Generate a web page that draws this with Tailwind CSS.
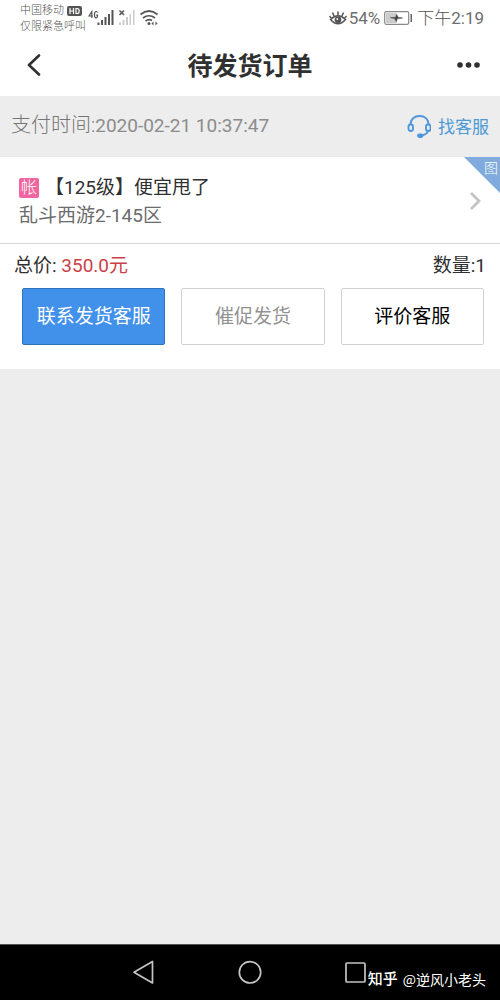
<!DOCTYPE html>
<html lang="zh-CN">
<head>
<meta charset="utf-8">
<meta name="viewport" content="width=device-width, initial-scale=1">
<title>待发货订单</title>
<script src="https://cdn.jsdelivr.net/npm/@tailwindcss/browser@4"></script>
</head>
<body class="flex min-h-screen flex-col bg-[#ededed] font-['Roboto','Noto_Sans_CJK_SC',sans-serif] text-[#303030]">

<!-- Status bar -->
<div class="flex h-9 items-center justify-between bg-white pr-4 pl-5 text-[#6e6e6e]">
  <div class="flex items-center">
    <div class="pt-[2px] text-[11px] leading-4 font-light text-[#555]">
      <div class="flex items-center gap-[3px]">中国移动
        <svg class="h-[10px] w-[15px]" viewBox="0 0 15 10" aria-hidden="true"><rect width="15" height="10" rx="2" fill="#555"/><path d="M3 2v6M6.500 2v6M3 5h3.500M9 2v6M9 2.500h1.200q2 0 2 2.500t-2 2.500H9" fill="none" stroke="#fff" stroke-width="1.200"/></svg>
      </div>
      <div>仅限紧急呼叫</div>
    </div>
    <svg class="ml-[2px] h-6 w-[72px]" viewBox="88 5 72 24" fill="#555" aria-hidden="true">
      <path d="M91.800 17V10.500L89 15h4M97.500 11.500q-.5-1-1.500-1-1.500 0-1.500 3.200t1.500 3.200q1.600 0 1.600-2.800h-1.400" fill="none" stroke="#555" stroke-width="1.200"/>
      <path d="M97.500 21.500h2v2.500h-2zM101 19h2v5h-2zM104.500 16h2v8h-2zM108 13h2v11h-2zM111.500 9h2v15h-2z"/>
      <path d="M119.500 9.500l4.500 4.500M124 9.500l-4.500 4.500" stroke="#555" stroke-width="1.600"/>
      <path fill="#ccc" d="M119 21.500h2v2.500h-2zM122.500 19h2v5h-2zM126 16h2v8h-2zM129.500 13h1.500v11h-1.500zM133 9h1.500v15H133z"/>
      <path d="M140.500 13.500q8.500-7 17 0M143 17q6-4.500 12 0M145.500 20q3.500-2.500 6.500-.5" fill="none" stroke="#555" stroke-width="1.700"/>
      <circle cx="149" cy="22.500" r="1.500"/><path d="M151.500 22.500l2-2v4zM157.500 22.500l-2-2v4z"/>
    </svg>
  </div>
  <div class="flex items-center text-[17px] leading-6">
    <svg class="mr-[2px] h-[18px] w-[18px]" viewBox="0 0 18 18" fill="none" stroke="#555" stroke-width="1.500" aria-hidden="true"><path d="M1.500 10.500Q9 3 16.500 10.500 9 19 1.500 10.500zM9 6V2.500M5 7L3.500 3.500M13 7l1.500-3.500M2.500 9.500L.5 7M15.500 9.500l2-2.500"/><circle cx="9" cy="10.800" r="2.600" fill="#555"/><circle cx="8.300" cy="10" r=".9" fill="#fff" stroke="none"/></svg>
    <span>54%</span>
    <svg class="mx-1 h-[14px] w-[29px]" viewBox="0 0 29 14" aria-hidden="true"><rect x=".7" y=".7" width="24" height="12.600" rx="1.500" fill="#fff" stroke="#888" stroke-width="1.200"/><path d="M2 2h11v10H2z" fill="#ccc"/><path d="M6.500 6.600l5-.2 1.200-2.900 1.500 2.900 4.300.6-5 .6-1.300 2.900-1.500-2.900z" fill="#444" stroke="#444" stroke-width=".6"/><path d="M26.500 3H28v8h-1.500z" fill="#666"/></svg>
    <span class="font-light text-[#505050]">下午<span class="font-normal text-[#6e6e6e]">2:19</span></span>
  </div>
</div>

<!-- Title bar -->
<header class="grid h-[60px] grid-cols-[1fr_auto_1fr] items-center bg-white px-4">
  <button type="button" aria-label="返回" class="flex h-10 w-9 items-center justify-center">
    <svg class="h-6 w-4" viewBox="0 0 16 24" fill="none" stroke="#303030" stroke-width="2.600" stroke-linecap="round" stroke-linejoin="round" aria-hidden="true"><path d="M13 1.500L3 11 13 20.500"/></svg>
  </button>
  <h1 class="pt-[2px] text-[25px] leading-9 font-bold">待发货订单</h1>
  <button type="button" aria-label="更多" class="flex h-10 w-8 items-center justify-center justify-self-end">
    <svg class="h-2 w-6" viewBox="0 0 24 8" fill="#303030" aria-hidden="true"><circle cx="4" cy="3" r="2.800"/><circle cx="12.500" cy="3" r="2.800"/><circle cx="21" cy="3" r="2.800"/></svg>
  </button>
</header>

<main class="grow">
  <div class="flex h-[61px] items-center justify-between px-[11px]">
    <p class="pb-[2px] text-[20px] leading-7 font-light text-[#757575]">支付时间:<span class="text-[19px] font-normal text-[#8c8c8c]">2020-02-21 10:37:47</span></p>
    <a href="#" class="flex items-center gap-[7px] text-[17px] leading-6 text-[#4d9ad6]">
      <svg class="h-6 w-6" viewBox="0 0 24 24" fill="none" stroke="#4f97dc" stroke-width="1.900" aria-hidden="true"><path d="M3.500 9.500C3.500 4 7.500 1 12.500 1s9 3 9 8.500M21.500 15q-1.500 4.500-6.500 5.500"/><rect x="1.500" y="9.500" width="4.500" height="6.500" rx="2.200"/><rect x="19" y="9.500" width="4.500" height="6.500" rx="2.200"/><rect x="11" y="19.500" width="4.500" height="2.500" rx="1.200" fill="#4f97dc"/></svg>
      找客服</a>
  </div>

  <section class="bg-white">
    <a href="#" class="relative flex h-[87px] items-center justify-between border-b border-[#d4d4d4] pr-[18px] pl-[19px]">
      <div class="pt-[3px]">
        <div class="flex items-center gap-[6px] text-[19px] leading-7">
          <span class="flex h-5 w-5 items-center justify-center rounded-xs bg-[#f0659f] text-[16px] leading-5 font-light text-white">帐</span>
          <span>【125级】便宜甩了</span>
        </div>
        <div class="text-[19px] leading-7 text-[#6c6c6c]">乱斗西游2-145区</div>
      </div>
      <svg class="h-5 w-3" viewBox="0 0 12 20" fill="none" stroke="#c4c4c4" stroke-width="2.800" aria-hidden="true"><path d="M1 3l8 8-8 8"/></svg>
      <span class="absolute top-0 right-0 flex h-9 w-9 justify-end bg-[#80abdc] pt-[3px] pr-[2px] text-[14px] leading-4 font-light text-white [clip-path:polygon(0_0,100%_0,100%_100%)]">图</span>
    </a>

    <div class="flex items-center justify-between px-[14px] pt-2 text-[19px] leading-7">
      <p>总价: <span class="text-[#cb4047]">350.0元</span></p>
      <p>数量:1</p>
    </div>
    <div class="grid grid-cols-3 gap-4 pt-2 pr-4 pb-6 pl-[22px] text-[19px] leading-7">
      <button type="button" class="h-[57px] rounded-xs border border-[#2f72bd] bg-[#4190e9] text-white">联系发货客服</button>
      <button type="button" class="h-[57px] rounded-xs border border-[#d2d2d2] text-[#929292]">催促发货</button>
      <button type="button" class="h-[57px] rounded-xs border border-[#d2d2d2] text-black">评价客服</button>
    </div>
  </section>
</main>

<!-- System navigation -->
<nav class="relative flex h-14 items-center justify-center gap-20 border-t border-[#555] bg-black">
  <button type="button" aria-label="后退" class="h-[26px] w-[26px]"><svg viewBox="0 0 26 26" fill="none" stroke="#c4c4c4" stroke-width="1.700" stroke-linejoin="round" aria-hidden="true"><path d="M21.500 1.500v21.500L3 12.200z"/></svg></button>
  <button type="button" aria-label="主屏幕" class="h-[26px] w-[26px]"><svg viewBox="0 0 26 26" fill="none" stroke="#c4c4c4" stroke-width="1.700" aria-hidden="true"><circle cx="13" cy="12.300" r="10.700"/></svg></button>
  <button type="button" aria-label="最近任务" class="h-[26px] w-[26px]"><svg viewBox="0 0 26 26" fill="none" stroke="#c4c4c4" stroke-width="1.700" aria-hidden="true"><rect x="3" y="3" width="19" height="19" rx="1"/></svg></button>
  <span class="absolute right-[14px] bottom-[11px] flex items-center gap-[5px] text-[14px] leading-5 text-white"><span class="text-[15px] font-medium">知乎</span><span class="font-['Noto_Sans_CJK_SC',sans-serif]">@逆风小老头</span></span>
</nav>
</body>
</html>
